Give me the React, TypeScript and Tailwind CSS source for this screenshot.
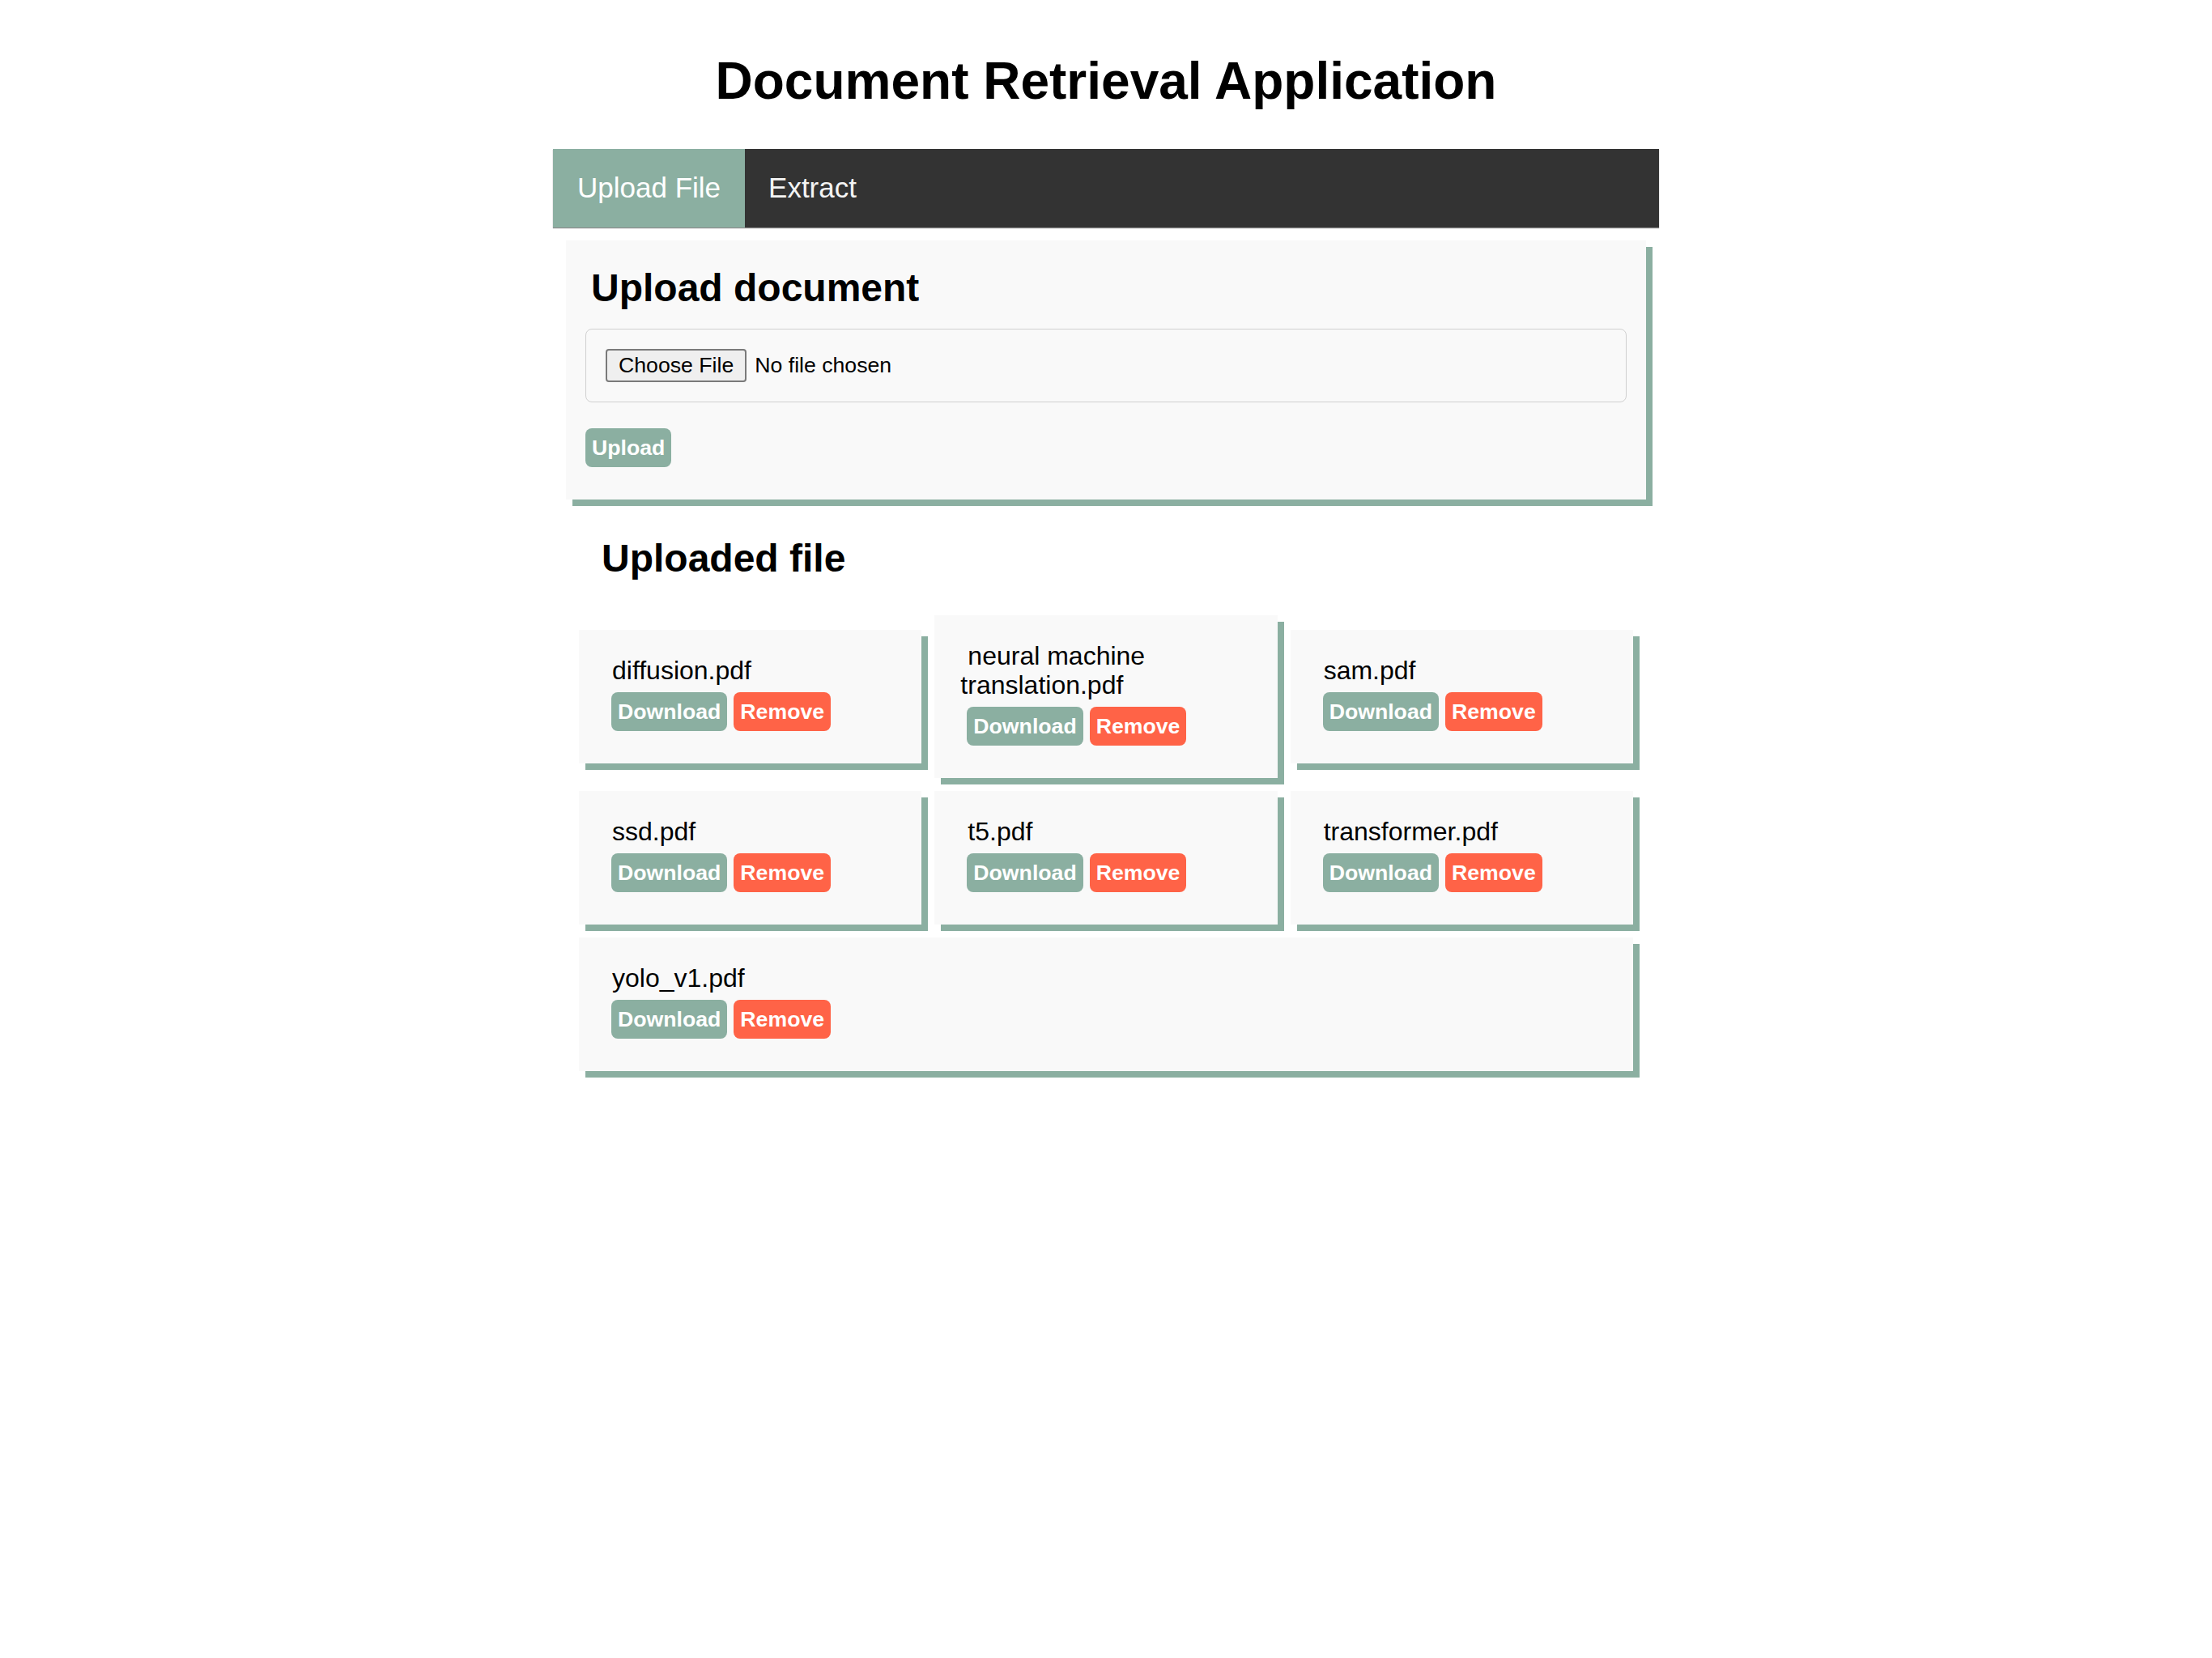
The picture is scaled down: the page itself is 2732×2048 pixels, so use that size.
import React from 'react';

const files = [
  'diffusion.pdf',
  'neural machine translation.pdf',
  'sam.pdf',
  'ssd.pdf',
  't5.pdf',
  'transformer.pdf',
  'yolo_v1.pdf',
];

function FileCard({ name }: { name: string }) {
  return (
    <div className="grow basis-[30%] bg-[#f9f9f9] px-[32px] pt-[32px] pb-[40px] shadow-[8px_8px_0_0_#8bafa1]">
      <p className="indent-[9px] text-[32px] leading-[36.8px] text-black">{name}</p>
      <div className="mt-[8px] ml-[8px] flex gap-[8px]">
        <button className="inline-flex h-[48px] items-center rounded-[8px] bg-[#8bafa1] px-[8px] text-[26.67px] font-bold text-white">
          Download
        </button>
        <button className="inline-flex h-[48px] items-center rounded-[8px] bg-[#ff6347] px-[8px] text-[26.67px] font-bold text-white">
          Remove
        </button>
      </div>
    </div>
  );
}

export default function App() {
  return (
    <div className="min-h-screen bg-white font-['Liberation_Sans',Arial,sans-serif] text-black">
      <h1 className="pt-[63px] text-center text-[64px] font-bold leading-[74px]">
        Document Retrieval Application
      </h1>

      <div className="mx-auto mt-[47px] w-[1366px]">
        <nav className="flex h-[97px] bg-[#333333] shadow-[0_1px_1px_rgba(0,0,0,0.45)]">
          <button className="bg-[#8bafa1] px-[30px] text-[35px] text-white">Upload File</button>
          <button className="px-[29px] text-[35px] text-[#f4f4f4]">Extract</button>
        </nav>

        <div className="px-[16px]">
          <section className="mt-[16px] bg-[#f9f9f9] px-[24px] pt-[24px] pb-[40px] shadow-[8px_8px_0_0_#8bafa1]">
            <h2 className="mt-[7px] ml-[7px] text-[48px] font-bold leading-[55px]">Upload document</h2>
            <div className="mt-[23px] rounded-[8px] border border-[#d0d0d0] p-[24px]">
              <input
                type="file"
                className="block text-[26.67px] leading-[30.67px] text-black file:mr-[10px] file:rounded-[4px] file:border-2 file:border-[#7a7a7a] file:bg-[#efefef] file:px-[14px] file:py-[3px] file:text-black"
              />
            </div>
            <button className="mt-[32px] inline-flex h-[48px] items-center rounded-[8px] bg-[#8bafa1] px-[8px] text-[26.67px] font-bold text-white">
              Upload
            </button>
          </section>

          <h2 className="mt-[45px] pl-[44px] text-[48px] font-bold leading-[55px]">Uploaded file</h2>

          <div className="mx-[16px] mt-[43px] flex flex-wrap items-center gap-[16px]">
            {files.map((f) => (
              <FileCard key={f} name={f} />
            ))}
          </div>
        </div>
      </div>
    </div>
  );
}
